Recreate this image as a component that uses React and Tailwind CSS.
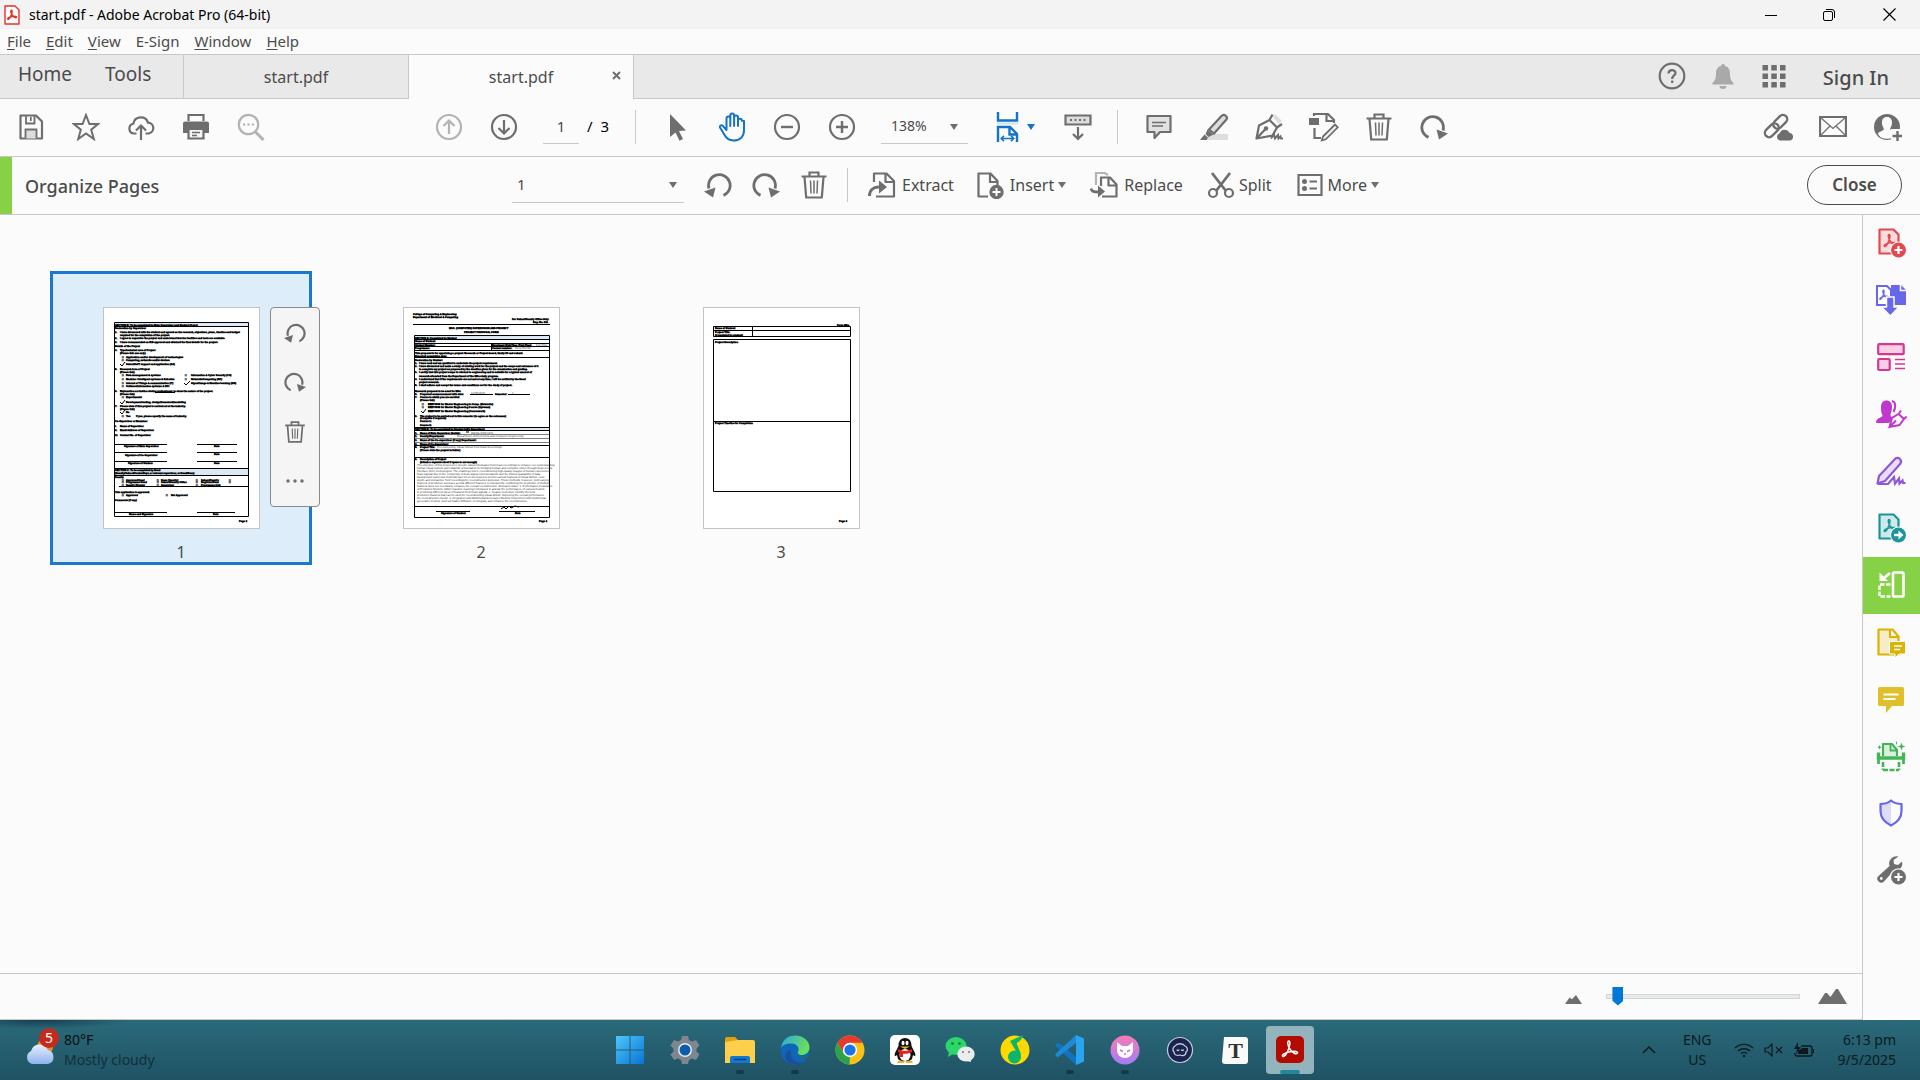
import React from 'react';

const G = '#6e6e6e';

function Icon({ size = 28, box = 28, children, className = '' }) {
  return (
    <svg width={size} height={size} viewBox={`0 0 ${box} ${box}`} fill="none" stroke={G} strokeWidth="2.2" className={`shrink-0 ${className}`} aria-hidden="true">
      {children}
    </svg>
  );
}

const AcroMark = ({ x = 0, y = 0, k = 1, color, w = 1.8 }) => (
  <path
    transform={`translate(${x} ${y}) scale(${k})`}
    d="M11 2.500c-2.200 0-1.600 5 1.500 9.800 2.600 4.200 7.300 6.200 8.600 4.200 1-1.700-3-2.500-8.600-1.600-6.200 1-10 3.800-8.800 5.400 1.400 1.800 5-3 7-8.600C12.400 6.900 12.800 2.500 11 2.500z"
    stroke={color}
    strokeWidth={w}
    fill="none"
    strokeLinejoin="round"
  />
);

/* ---------- toolbar icons ---------- */
const Save = () => (
  <Icon>
    <path d="M3.500 2.500H19l6 6v17H3.500z" strokeLinejoin="round" />
    <path d="M9 2.500v8h8.500v-8M13.800 4v4" strokeWidth="1.800" />
    <path d="M8.500 25.500v-9h11v9" fill="#dcdcdc" strokeWidth="1.800" />
  </Icon>
);
const Star = () => (
  <Icon><path d="M14 2l3.400 9H26l-6.800 5.700 2.600 9.300L14 20.500 6.200 26l2.600-9.300L2 11h8.600z" strokeWidth="2" strokeLinejoin="miter" /></Icon>
);
const Cloud = () => (
  <Icon>
    <path d="M9.500 20.500H6.500A5 5 0 0 1 6.300 10.700 7.600 7.600 0 0 1 21 9.600a5.500 5.500 0 0 1 .8 10.900h-3.300" />
    <path d="M14 27V13M9 17.500l5-5 5 5" />
  </Icon>
);
const Print = () => (
  <Icon>
    <path d="M6.500 8V2h15v6" />
    <path d="M3 8.500h22a2 2 0 0 1 2 2V20h-5v-3H6v3H1v-9.500a2 2 0 0 1 2-2z" fill={G} stroke="none" />
    <path d="M6.500 16h15v9.500h-15z" fill="#f4f4f4" />
    <path d="M10 19.500h8M10 22.500h5" strokeWidth="1.500" />
  </Icon>
);
const Search = () => (
  <Icon>
    <g stroke="#b3b3b3">
      <circle cx="11.500" cy="11.500" r="9.700" />
      <path d="M18.500 19l8 8" strokeWidth="3" />
      <path d="M6 11.500h2.200M10.400 11.500h2.200M14.800 11.500H17" />
    </g>
  </Icon>
);
const Up = () => (
  <Icon><g stroke="#b3b3b3"><circle cx="14" cy="14" r="12" /><path d="M14 21V8M8.500 13L14 7.500 19.500 13" /></g></Icon>
);
const Down = () => (
  <Icon><circle cx="14" cy="14" r="12" /><path d="M14 7v13M8.500 15l5.500 5.500 5.500-5.500" /></Icon>
);
const Pointer = () => (
  <Icon><path d="M7 1l16 16.500-7 .6 4 8-3.500 1.700-4-8.200L7 24z" fill={G} stroke="none" /></Icon>
);
const Hand = () => (
  <Icon size={30} box={30}>
    <path
      stroke="#1473c8" strokeLinejoin="round" strokeLinecap="round" strokeWidth="2"
      d="M9.500 17V6.500a1.900 1.900 0 0 1 3.800 0V3.400a1.900 1.900 0 0 1 3.800 0v2a1.900 1.900 0 0 1 3.900 0v3.300a1.900 1.900 0 0 1 3.900 0L27 9v9c0 6.500-4 10.500-10.500 10.500-5 0-7.500-2.500-9.500-6.500L3 15.500c-.8-1.800 1.300-3 2.600-1.800L9.500 18M13.300 6.500V14M17.100 5.400V14M21 8v6"
    />
  </Icon>
);
const Minus = () => <Icon><circle cx="14" cy="14" r="12" /><path d="M8 14h12" strokeWidth="2.400" /></Icon>;
const Plus = () => <Icon><circle cx="14" cy="14" r="12" /><path d="M8 14h12M14 8v12" strokeWidth="2.400" /></Icon>;
const Fit = () => (
  <Icon size={30} box={30}>
    <g stroke="#1473c8" strokeWidth="2.400">
      <path d="M5 0v8.500h19V0" />
      <path d="M4 11.500h21" stroke="#cfe3f5" strokeWidth="2" />
      <path d="M5 30V15h12l7 7v8M16.500 15v7.500H24" />
      <path d="M8.500 26.500h12M11 23.800l-2.800 2.700 2.800 2.700M18 23.800l2.800 2.700-2.800 2.700" strokeWidth="1.600" />
    </g>
  </Icon>
);
const Scroll = () => (
  <Icon>
    <path d="M1.500 2.500h25v9h-25z" fill="#dcdcdc" />
    <path d="M6 7h2M10.500 7h2M15 7h2M19.500 7h2" strokeWidth="2" />
    <path d="M14 14v12M9 21l5 5 5-5" />
  </Icon>
);
const Comment = () => (
  <Icon><path d="M2.500 3h23v16H15l-5.500 6v-6h-7z" fill="#e2e2e2" strokeLinejoin="round" /><path d="M7 9.500h14M7 13h11" strokeWidth="1.300" /></Icon>
);
const Highlight = () => (
  <Icon>
    <path d="M10 21h18v6H6z" fill="#dedede" stroke="none" />
    <path d="M9 16.500L21.500 3a3 3 0 0 1 4.500 4L14 20.500z" fill="#dedede" />
    <path d="M7.500 16.500l6 5-5 2.500-3-3zM4.500 21.500l3.500 3-1.500 2.500H0z" fill={G} stroke="none" />
  </Icon>
);
const Sign = () => (
  <Icon>
    <path d="M17 3l3-2 7 7-3 3z" fill="#dedede" stroke="none" />
    <path d="M1.500 25.500L4 12.500 14.500 7l7.500 7.500-4.500 8zM1.500 25.500l9-9.500M14.500 7l3-5.500M22 14.500l5-3.500" strokeLinejoin="round" strokeWidth="2.200" />
    <circle cx="11" cy="15.500" r="1.200" fill={G} />
    <path d="M16 25.500l3-4 1 4 3-3.500.5 3.500 2-2 .5 2h2" strokeWidth="2" />
  </Icon>
);
const EditDoc = () => (
  <Icon size={30} box={30}>
    <path d="M0 6h10v7H0z" fill={G} stroke="none" />
    <path d="M5 4V2h14l6 6v3M17.500 2v7H25M5.500 16v10H12" />
    <path d="M14 24.500L26 12.500l2.800 2.800L16.800 27.300l-4 1.200z" fill="#f2f2f2" strokeWidth="1.800" />
  </Icon>
);
const Trash = ({ size = 28 }) => (
  <Icon size={size}>
    <path d="M9.500 5.500v-4h9v4M1.500 5.500h25" />
    <path d="M4.500 6l1.700 20.500h15.600L23.500 6" />
    <path d="M10.500 9.500l.5 13M14 9.500v13M17.500 9.500l-.5 13" strokeWidth="1.500" />
  </Icon>
);
const Rotate = ({ flip, size = 28 }) => (
  <Icon size={size}>
    <g transform={flip ? 'translate(28 0) scale(-1 1)' : undefined}>
      <path d="M8.500 24.400A10.800 10.800 0 1 1 23 17.500" strokeWidth="2.800" />
      <path d="M16.500 16.500l11.500 4-9 6z" fill={G} stroke="none" />
    </g>
  </Icon>
);
const LinkCloud = () => (
  <Icon size={30} box={30}>
    <g transform="rotate(-45 13 14)" strokeWidth="2.400">
      <rect x="-1" y="9.800" width="16" height="8.500" rx="4.200" />
      <rect x="11" y="9.800" width="16" height="8.500" rx="4.200" />
    </g>
    <path d="M14 21.500l8-5 8 5v7H13z" fill="#fbfbfb" stroke="none" />
    <path d="M17 28.500a3.700 3.700 0 0 1-.3-7.200 5.400 5.400 0 0 1 9.800-.6 4 4 0 0 1 .8 7.800z" fill={G} stroke="none" />
  </Icon>
);
const Mail = () => (
  <Icon><path d="M1 4h26v19H1z" /><path d="M1.500 4.500L14 15.500 26.500 4.500M1.500 22.500l9.500-9.500M26.500 22.500L17 13" strokeWidth="1.300" /></Icon>
);
const AddUser = () => (
  <Icon>
    <circle cx="13" cy="14" r="13" fill={G} stroke="none" />
    <path d="M13 4c3.600 0 5.300 2.700 5 6.500-.2 2.700-1.600 4-1.800 5.400-.2 1.700 5.300 2.600 6 4.600C20 25 17 25.800 13 25.800S6 25 3.800 20.500c.7-2 6.200-2.900 6-4.600C9.600 14.500 8.200 13.200 8 10.500 7.700 6.700 9.400 4 13 4z" fill="#fbfbfb" stroke="none" />
    <path d="M17 16h11v12H17z" fill="#fbfbfb" stroke="none" />
    <path d="M23.500 18v10M18.500 23h10" strokeWidth="2.400" />
  </Icon>
);

/* ---------- organise bar icons ---------- */
const Extract = () => (
  <Icon>
    <path d="M6 11V2.500h12.500L26 10v15.500H8M17.500 2.500V11H26" strokeLinejoin="round" />
    <path d="M1.500 25c0-6 4-9 9-9h3" strokeWidth="3" /><path d="M11 9.500l8 6.500-8 6.500z" fill={G} stroke="none" />
  </Icon>
);
const Insert = () => (
  <Icon>
    <path d="M12 25.500H2.500v-23h12L21.500 10v4M14 2.500V11h7.500" strokeLinejoin="round" />
    <circle cx="20.500" cy="21" r="7.200" fill={G} stroke="none" /><path d="M20.500 17v8M16.500 21h8" stroke="#fff" strokeWidth="2" />
  </Icon>
);
const Replace = () => (
  <Icon>
    <path d="M6 14V2h9l3 2" stroke="#b3b3b3" />
    <path d="M11 15V6.500h9l6.500 7v12H12M18.500 6.500v8h8" strokeLinejoin="round" />
    <path d="M1 17.500c.5 3 2.500 3.500 8 3.500" strokeWidth="2.800" /><path d="M8 14.500l7 6-7 6z" fill={G} stroke="none" />
  </Icon>
);
const Split = () => (
  <Icon>
    <path d="M5 2l14 18M23 2L9 20" strokeWidth="2.800" />
    <circle cx="6" cy="22" r="4" /><circle cx="22" cy="22" r="4" />
  </Icon>
);
const MoreList = () => (
  <Icon>
    <path d="M2.500 4h23v20h-23z" />
    <circle cx="8.500" cy="10.500" r="2.500" fill={G} stroke="none" /><circle cx="8.500" cy="17.500" r="2.500" fill={G} stroke="none" />
    <path d="M13.500 10.500H21M13.500 17.500H21" />
  </Icon>
);
const Caret = ({ className = '', color = G }) => (
  <svg width="8" height="6" viewBox="0 0 8 6" className={`shrink-0 ${className}`} aria-hidden="true"><path d="M0 0h8L4 6z" fill={color} /></svg>
);

/* ---------- right rail ---------- */
const PdfPage = ({ c, f }) => (
  <>
    <path d="M3.500 1.500h14l5 5v19h-19z" fill={f} stroke={c} strokeLinejoin="round" />
    <AcroMark x={6} y={5} k={0.65} color={c} w={2.4} />
  </>
);
const rail = [
  ['Create PDF', <><PdfPage c="#e34850" f="#fadcdc" /><circle cx="22.500" cy="22" r="8.500" fill="#fbfbfb" stroke="none" /><circle cx="22.500" cy="22" r="7.500" fill="#e34850" stroke="none" /><path d="M22.500 18v8M18.500 22h8" stroke="#fff" strokeWidth="2.200" /></>],
  ['Export PDF', <><path d="M1 1h10l4 4v15H1z" stroke="#6767ec" strokeWidth="2" fill="#fff" /><path d="M15 0h10l5 5v15H15z" fill="#6767ec" stroke="none" /><path d="M24.500 0v5.500H30" stroke="#fff" strokeWidth="1.500" /><AcroMark x={2} y={4} k={0.5} color="#6767ec" w={2.6} /><path d="M10.500 12h7.500v10h5L14.300 31 5.500 22h5z" fill="#6767ec" stroke="#fbfbfb" strokeWidth="1.500" /></>],
  ['Edit PDF', <><rect x="2.200" y="2.200" width="25.500" height="10" rx="1" fill="#f7cfe6" stroke="#d83790" /><rect x="2.200" y="17" width="11.500" height="11" rx="1" fill="#f7cfe6" stroke="#d83790" /><path d="M19 17.500h10M19 22h10M19 26.500h10" stroke="#d83790" strokeWidth="1.600" /></>],
  ['Request E-signatures', <><path d="M0 24c0-6 7-5 6.500-8C5 14 5 11 5 8c0-4 2-6.500 5.500-6.500S16 4 16 8c0 4-1.500 6-1.500 8 0 1.500 1.500 2 2 3L13 24z" fill="#c038cc" stroke="none" /><path d="M16 2c4 1 4 6 1.500 11" stroke="#c038cc" strokeWidth="2" /><path d="M13.500 28l2.500-9 6.500-4 5.500 5-4.500 6zM14 27.500l6-6M23 14.500l2-3M28 20l2.500-2.500" stroke="#c038cc" strokeWidth="2" fill="#fbfbfb" /></>],
  ['Fill & Sign', <><path d="M3 20L19.500 2.500c3-2 7 1.500 5 5L9 25l-7.500 2.500z" fill="#e8defa" stroke="#9256d9" strokeLinejoin="round" /><path d="M2 28h10l6-7 1 6.500 4-5 .5 5 3-3 .5 2.500h2.500" stroke="#9256d9" /></>],
  ['Send for Comments', <><PdfPage c="#1b959a" f="#cfe9ea" /><circle cx="22.500" cy="22" r="8.500" fill="#fbfbfb" stroke="none" /><circle cx="22.500" cy="22" r="7.500" fill="#1b959a" stroke="none" /><path d="M18 22h6" stroke="#fff" strokeWidth="2.400" /><path d="M22.500 17.500l5 4.500-5 4.500z" fill="#fff" stroke="none" /></>],
  ['Organize Pages', <><rect x="17" y="2.500" width="10.500" height="24" rx="1" stroke="#fff" strokeWidth="2.600" /><path d="M14.500 14.500h-11v12h11" stroke="#fff" strokeWidth="2.400" strokeDasharray="4.500 1.500" /><path d="M14 3L8 8" stroke="#fff" strokeWidth="2.800" /><path d="M3.500 2.500V11H12z" fill="#fff" stroke="none" /></>],
  ['Combine Files', <><path d="M2.500 2.500h14l6 7v18h-20zM14 2.500V10h8" fill="#f4edc8" stroke="#dbb304" strokeLinejoin="round" /><path d="M13.500 14.500h16v12.500h-6.500l-4 4v-4h-5.500z" fill="#dbb304" stroke="#fbfbfb" strokeWidth="1" /><path d="M18 19h8M18 22.500h6" stroke="#fff" strokeWidth="1.500" /></>],
  ['Comment', <><path d="M3.500 3h23a1.500 1.500 0 0 1 1.500 1.500v16a1.500 1.500 0 0 1-1.500 1.500H16l-6 7v-7H3.500A1.500 1.500 0 0 1 2 20.500v-16A1.500 1.500 0 0 1 3.500 3z" fill="#dfbf2b" stroke="none" /><path d="M7.500 10.500h15M7.500 15h12" stroke="#fff" strokeWidth="2" /></>],
  ['Scan & OCR', <><path d="M7 15V3h9l5 6v6" fill="#d8f0dc" stroke="#44b556" /><path d="M14.500 3v6.500H21" stroke="#44b556" strokeWidth="1.800" /><path d="M2.500 11.500V17h25v-5.500" stroke="#44b556" strokeWidth="3.400" /><path d="M2.500 15v8M27.500 15v8" stroke="#44b556" strokeWidth="2.800" /><path d="M7 21v8M23 21v8M7 29h16" stroke="#44b556" strokeDasharray="5 1.500" strokeWidth="2.600" /><path d="M25.500 1.500l1 3 3 1-3 1-1 3-1-3-3-1 3-1zM3.500 4l.7 1.500 1.500.7-1.500.7-.7 1.500-.7-1.500-1.500-.7 1.500-.7zM20.500 0l.7 2-.7 2-.7-2z" fill="#44b556" stroke="none" /></>],
  ['Protect', <><path d="M15 2.500V27.500C8 24 4.500 19.500 4.500 13V6c4 0 8-1 10.500-3.500z" fill="#dcdcf8" stroke="none" /><path d="M15 2.500c3 2.500 6.500 3.500 10.500 3.500v7c0 6.500-3.500 11-10.500 14.500C8 24 4.500 19.500 4.500 13V6C8.500 6 12 5 15 2.500z" stroke="#6767ec" strokeLinejoin="round" /></>],
  ['More Tools', <><path d="M22.500 1.500a7.500 7.500 0 0 0-9 9.500L2.500 21a3.800 3.800 0 0 0 5.500 5.500L17.500 16a7.500 7.500 0 0 0 8.500-9.500l-4 3.500-4-1-.5-4z" fill={G} stroke="none" /><circle cx="5.300" cy="23.500" r="1.400" fill="#fbfbfb" stroke="none" /><circle cx="22.500" cy="22" r="8.700" fill="#fbfbfb" stroke="none" /><circle cx="22.500" cy="22" r="7.500" fill={G} stroke="none" /><path d="M22.500 18v8M18.500 22h8" stroke="#fff" strokeWidth="2.200" /></>],
];

/* ---------- miniature pages ---------- */
const pageOne = [
  [12, 19, 'SECTION B: To be completed by Main Supervisor and Student (if any)'],
  [12, 22, 'Declaration by Supervisor'],
  [12, 26, '1.'], [17, 26, 'I have discussed with the student and agreed on the research, objectives, plans, timeline and budget'],
  [17, 29, 'required for the completion of the project.'],
  [12, 32, '2.'], [17, 32, 'I agree to supervise the project and understand that the facilities and tools are available.'],
  [12, 36, '3.'], [17, 36, 'I have recommended an IRB approval and obtained the final details for the project.'],
  [12, 40, 'Details of the Project'],
  [12, 44, '4.'], [17, 44, 'Type/technical area of Project'], [17, 47, '(Please tick one only)'],
  [19, 51, '□'], [23, 51, 'Application and/or development of technologies'],
  [19, 54, '□'], [23, 54, 'Computing, networks and/or devices'],
  [23, 58, 'Scientific/IT support and application (SA)'],
  [12, 63, '5.'], [17, 63, 'Research Area of Project'], [17, 66, '(Please tick)'],
  [19, 69, '□'], [23, 69, 'Data management & systems'], [82, 69, '□'], [88, 69, 'Information & Cyber Security (CS)'],
  [19, 73, '□'], [23, 73, 'Machine / Intelligent systems & Robotics'], [82, 73, '□'], [88, 73, 'Networks/Computing (NC)'],
  [19, 77, '□'], [23, 77, 'Internet of Things & communication (IT)'], [88, 77, 'Signal/Image & Machine learning (MS)'],
  [19, 80, '□'], [23, 80, 'Software/Information systems & HCI'],
  [12, 85, '6.'], [17, 85, 'Explanation on the/the relating professional, to show the nature of the project.'], [17, 88, '(Please tick)'],
  [19, 91, '□'], [23, 91, 'Experimental'],
  [23, 96, 'Development/coding, design/framework/modelling'],
  [12, 100, '7.'], [17, 100, 'Please state if this project is carried out at the industry.'], [17, 103, '(Please tick)'],
  [23, 106, 'No'], [19, 110, '□'], [23, 110, 'Yes'], [33, 110, 'If yes, please specify the name of industry.'],
  [12, 115, 'Co-Supervisor or Examiner'],
  [12, 120, 'i.'], [17, 120, 'Name of Supervisor'], [12, 124, 'ii.'], [17, 124, 'Email Address of Supervisor'], [12, 129, 'iii.'], [17, 129, 'Contact No. of Supervisor'],
  [21, 140, 'Signature of Main Supervisor'], [111, 140, 'Date'],
  [22, 149, 'Signature of Co-Supervisor'], [111, 148, 'Date'],
  [25, 157, 'Signature of Student'], [111, 157, 'Date'],
  [12, 164, 'SECTION C: To be completed by Head'],
  [12, 167, '(Faculty/School/Centre/Dept, or relevant supervisor, or Head/Dean)'],
  [12, 171, 'Faculty'],
  [19, 174, '□'], [23, 174, 'Approved Head'], [54, 174, '□'], [58, 174, 'Dean (Faculty)'], [93, 174, '□'], [98, 174, 'School/Faculty'], [126, 174, '□'],
  [19, 176, '□'], [23, 176, 'Programme Head'], [54, 176, '□'], [58, 176, 'School/Faculty Office'], [93, 176, '□'], [98, 176, 'Registrar/Dean'], [126, 176, '□'],
  [19, 179, '□'], [23, 179, 'Faculty Director'], [54, 179, '□'], [58, 179, 'Supervisor'], [93, 179, '□'], [98, 179, 'Programme Unit'],
  [12, 186, 'This application is approved:'],
  [19, 189, '□'], [23, 189, 'Approved'], [63, 189, '□'], [68, 189, 'Not Approved'],
  [12, 194, 'Comments (if any)'],
  [26, 208, 'Name and Signature'], [110, 208, 'Date'],
  [136, 215, 'Page 2'],
];

const pageTwo = [
  [10, 8, 'College of Computing & Engineering'], [10, 11, 'Department of Electrical & Computing'],
  [109, 13, 'For School/Faculty Office Only'], [130, 16, 'Reg. No. 001'],
  [46, 22, 'MSC. (COMPUTER) SUPERVISION AND PROJECT'], [61, 26, 'PROJECT PROPOSAL FORM'],
  [12, 32, 'SECTION A: Completed by Student'],
  [12, 35, 'Name of Student:'], [12, 39, 'Student Number:'], [89, 39, 'Enrolment (Full-Time / Part-Time)'],
  [12, 42, 'Programme:'], [89, 42, 'Contact number:'],
  [12, 47, 'This proposal is for appointing a project: Research or Project-based, kindly fill and submit.'], [12, 50, 'Expected completion date:'],
  [12, 54, 'Declaration by Student'],
  [12, 57, '1.'], [16, 57, 'I have read and am qualified to undertake the project requirement.'],
  [12, 60, '2.'], [16, 60, 'I have discussed and make a study of existing work for the project and the scope and outcomes of it'],
  [16, 63, 'to complete my project as proposed by the deadline given for the examination and grading.'],
  [12, 66, '3.'], [16, 66, 'I certify that this project scope is relevant to engineering and is suitable for a typical amount of'],
  [16, 70, 'research allocated from the Department of the MSc study program.'],
  [12, 73, '4.'], [16, 73, 'I understand that if the requirements are not met at any time, I will be notified by the Head'], [16, 76, 'project research.'],
  [12, 79, '5.'], [16, 79, 'I shall adhere and accept the terms and conditions set for the study of project.'],
  [12, 85, 'Research proposal to be used for MSc'],
  [12, 88, '6.'], [17, 88, 'Proposed commencement with date:'], [92, 88, 'Semester:'],
  [12, 91, '7.'], [17, 91, 'Course in which you are enrolled'], [17, 94, '(Please tick)'],
  [19, 98, '□'], [25, 98, 'EEEY4099 for Master Engineering in Comp. (Networks)'],
  [19, 101, '□'], [25, 101, 'EEEY4098 for Master Engineering Course (Systems)'],
  [25, 105, 'EEEY4097 for Master Engineering (Coursework)'],
  [12, 110, '8.'], [17, 110, 'The project to be carried out in this semester (to agree as the outcomes)'], [17, 112, '(Complete if required)'], [17, 115, 'Course 1:'], [17, 119, 'Course 2:'],
  [12, 123, 'SECTION B: To be completed by Student (with Supervisor)'],
  [12, 127, '1.'], [17, 127, 'Name of Main Supervisor (Guide):'], [12, 130, '2.'], [17, 130, 'Faculty/Department:'],
  [12, 134, '3.'], [17, 134, 'Name of the Co-supervisor (if any) Department:'], [12, 138, '4.'], [17, 138, 'Name of Co-Supervisor:'],
  [12, 141, '5.'], [17, 141, 'Project Title:'], [17, 144, '(Please state the project in italics)'],
  [12, 153, '6.'], [17, 153, 'Description of Project'], [17, 156, '(Attach a separate sheet if space is not enough)'],
  [38, 207, 'Signature of Student'], [112, 207, 'Date'], [136, 215, 'Page 1'],
];
const abstract = [
  'The objective of this project is to decode visual information from brain recordings to enhance our understanding',
  'human visual system and establish a foundation for bridging human and computer vision through Brain-Comp',
  'Interface (BCI) technologies. The challenge lies in reconstructing high-quality images of human experiences',
  'brain signals due to the complexity of brain signal representations and the limited availability of data.',
  'Background numerous methods have been developed to predict various features of visual stimuli, color,',
  'depth, and semantics, from recordings for reconstruction purposes. These methods, however, yield varying',
  'degrees of prediction accuracy across different features. Consequently, combining the prediction of multiple',
  'features does not necessarily enhance the overall reconstruction. Research Issue: 1. Performance Evaluation',
  'of Prediction Models: Utilize machine learning techniques to assess the performance of various models',
  'in predicting different types of features from brain signals. 2. Feature Selection: Identify the best',
  'predictive features that can be used for reconstructing visual stimuli, improving the overall performance',
  'the reconstruction model. 3. Integration with Multimodal Generative Models: Experiment with multimodal',
  'generative models, such as Stable Diffusion, to integrate and enhance the reconstruction.',
];
const pageThree = [
  [134, 19, 'Form MSc'], [12, 22, 'Name of Student:'], [12, 26, 'Project Title:'], [12, 29, '(Completed by student)'],
  [12, 36, 'Project Description'], [12, 117, 'Project Timeline for Completion'], [136, 215, 'Page 3'],
];

function Sheet({ rows, children, label }) {
  return (
    <svg width="157" height="222" viewBox="0 0 157 222" role="img" aria-label={label} className="block shrink-0 bg-white" textRendering="geometricPrecision">
      <rect x="0.500" y="0.500" width="156" height="221" fill="#fff" stroke="#c4c4c4" />
      {children}
      <g fontFamily="Liberation Sans, sans-serif" fontSize="2.500" fontWeight="700" fill="#000" stroke="#000" strokeWidth="0.400">
        {rows.map(([x, y, t], i) => <text key={i} x={x} y={y}>{t}</text>)}
      </g>
    </svg>
  );
}
const K = { fill: 'none', stroke: '#000', strokeWidth: 1 };

const sheets = [
  <Sheet key="1" rows={pageOne} label="Page 1">
    <path d="M11 16h135v4H11zM11 162h135v7H11z" fill="#dbe8f5" />
    <path {...K} d="M11.500 15.500h134v194h-134zM11 19.500h135M11 161.500h135M11 168.500h135M11 137.500h53M94 137.500h40M11 145.500h53M94 145.500h40M11 154.500h53M94 154.500h40M16 179.500h129M11 205.500h53M94 205.500h38M52 85.500h20" />
    <path {...K} d="M17 57l2 2 3-4M17 95l2 2 3-4M17 105l2 2 3-4M81 76l2 2 4-4" />
  </Sheet>,
  <Sheet key="2" rows={pageTwo} label="Page 2">
    <path d="M11 29h135v3H11zM11 120h135v4H11z" fill="#dbe8f5" />
    <path {...K} d="M10 17.500h137M11.500 28.500h135v182h-135zM11 32.500h135M11 36.500h135M11 39.500h135M11 43.500h135M88.500 36v7M11 50.500h135M11 120.500h135M11 123.500h135M11 138.500h135M11 150.500h135M11 199.500h135M67 87.500h23M105 87.500h22M33 204.500h34M96 204.500h36" />
    <path {...K} strokeWidth="0.500" d="M11 127.500h135M11 131.500h135M11 135.500h135" />
    <path {...K} d="M18 104l2 2 3-4M63 125h3M98 202l3-2 2 2 3-3 2 2 4-2 4 1" />
    <g fontFamily="Liberation Sans, sans-serif" fontSize="2.800" fill="#333">
      <text x="68" y="127">WANG XINCHEN</text><text x="133" y="39">Full-Time</text><text x="112" y="42">0123456789</text>
      <text x="54" y="130">Department of Electronics and Computer Engineering</text>
      <text x="34" y="141">Reconstructing Visual Stimuli from Brain Recordings</text>
      <text x="68" y="87">12/05/2025</text><text x="109" y="87">1</text>
      {abstract.map((t, i) => <text key={t} x="14" y={159 + i * 3}>{t}</text>)}
    </g>
  </Sheet>,
  <Sheet key="3" rows={pageThree} label="Page 3">
    <path {...K} d="M10.500 19.500h137v10h-137zM10 23.500h137M49.500 19v10M10.500 32.500h137v152h-137zM10 114.500h137" />
  </Sheet>,
];

/* ---------- taskbar icons ---------- */
const apps = [
  { n: 'Start', g: <><defs><linearGradient id="win" x1="0" y1="0" x2="1" y2="1"><stop stopColor="#4cc8fb" /><stop offset="1" stopColor="#0a74d4" /></linearGradient></defs><path d="M1 1h13.500v13.500H1zM15.500 1H29v13.500H15.500zM1 15.500h13.500V29H1zM15.500 15.500H29V29H15.500z" fill="url(#win)" /></> },
  { n: 'Settings', g: <><path d="M12 1h6l1 4 3 1.500 4-1.500 3.500 5.500-3 3v3l3 3L26 25l-4-1.500-3 1.500-1 4h-6l-1-4-3-1.500L4 25 .5 19.500l3-3v-3l-3-3L4 5l4 1.500L11 5z" fill="#7e868f" /><circle cx="15" cy="15" r="7" fill="#e8eef2" /><circle cx="15" cy="15" r="5.500" fill="#0b5cad" /></> },
  { n: 'File Explorer', run: true, g: <><path d="M0 4a2 2 0 0 1 2-2h8l3 3v5H0z" fill="#e3a008" /><path d="M0 7l13-2h15a2 2 0 0 1 2 2v21H0z" fill="#fdcf4a" /><path d="M5 28v-5a2 2 0 0 1 2-2h16a2 2 0 0 1 2 2v5z" fill="#1378d4" /><path d="M9 24.500h12" stroke="#083e75" strokeWidth="1.500" /></> },
  { n: 'Edge', run: true, g: <><defs><linearGradient id="edge" x1="0" y1="0" x2="1" y2=".4"><stop stopColor="#2aa7e0" /><stop offset="1" stopColor="#6ae05a" /></linearGradient></defs><circle cx="15" cy="15" r="14.500" fill="#0f66b8" /><path d="M1 13C2 5 8 .5 15 .5c9 0 14.500 6 14.500 12 0 5-4 7.500-8 7.500-3 0-4.500-1.500-3.500-3C20 13 17 8.500 11.500 8.500 6 8.500 2 10.500 1 13z" fill="url(#edge)" /><path d="M11 15c-2 7 4 13 12 12-6 4-14 3-17-3-2-4 0-8 5-9z" fill="#1b4f9c" /><path d="M18 18c1 4 7 4 11 1.500-1 1.500-1.500 2.500-2.500 3.500-4 1-9-1-8.500-5z" fill="#27677a" /></> },
  { n: 'Chrome', g: <><circle cx="15" cy="15" r="14.500" fill="#fbc116" /><path d="M2.400 7.750A14.500 14.500 0 0 1 27.600 7.750H15L8.700 18.600z" fill="#e33b2e" /><path d="M2.400 7.750L8.700 18.600 15 22.500 14.500 29.500A14.500 14.500 0 0 1 2.400 7.750z" fill="#2ba24c" /><circle cx="15" cy="15" r="7.200" fill="#fff" /><circle cx="15" cy="15" r="5.600" fill="#1a73e8" /></> },
  { n: 'QQ', g: <><rect width="30" height="30" rx="5" fill="#fff" /><path d="M15 3c-5 0-6.500 4-6.500 8L5 18c-1 3 0 4 2 2l1 4c2 3 12 3 14 0l1-4c2 2 3 1 2-2l-3.500-7c0-4-1.500-8-6.500-8z" fill="#111" /><ellipse cx="15" cy="20" rx="5.500" ry="6" fill="#fff" /><ellipse cx="13" cy="8" rx="1.500" ry="2.200" fill="#fff" /><ellipse cx="17" cy="8" rx="1.500" ry="2.200" fill="#fff" /><path d="M10 11.500h10l-5 2.500zM8 26h6v2H7zM16 26h6l1 2h-7z" fill="#fbb116" /><path d="M8 14c4 2.500 10 2.500 14 0v3c-3 1.500-6 2-9 1.800V22h-3v-4l-2-1z" fill="#e61f19" /></> },
  { n: 'WeChat', g: <><ellipse cx="11" cy="11" rx="10.500" ry="9" fill="#2bd66a" /><path d="M4 17l-1 5 5-3z" fill="#2bd66a" /><circle cx="7.500" cy="8.500" r="1.300" fill="#14713a" /><circle cx="14.500" cy="8.500" r="1.300" fill="#14713a" /><ellipse cx="21" cy="19" rx="8.700" ry="7.500" fill="#e9edee" /><path d="M22 26l4 1-.5-4z" fill="#e9edee" /><circle cx="18" cy="17" r="1" fill="#777" /><circle cx="24" cy="17" r="1" fill="#777" /></> },
  { n: 'QQ Music', g: <><circle cx="15" cy="15" r="14.500" fill="#ffd800" /><circle cx="14.500" cy="22" r="6.500" fill="#0bb56b" /><path d="M23 0L10 6l9 15 2-2L16.500 8C19 7 22 5 23 0z" fill="#0bb56b" /></> },
  { n: 'Visual Studio Code', run: true, g: <><path d="M21 0l8 3.500v23L21 30 0 10.500l2.500-3 4.500 2.500 14 12z" fill="#1173be" /><path d="M0 19.500l2.500 3L21 8V0L2.500 17z" fill="#1c8ad6" /><path d="M21 0l8 3.500v23L21 30z" fill="#2ba4ee" /></> },
  { n: 'GitHub Cat', run: true, g: <><defs><linearGradient id="cat" x1="0" y1="0" x2="0" y2="1"><stop stopColor="#f77bb4" /><stop offset="1" stopColor="#a47cf7" /></linearGradient></defs><circle cx="15" cy="15" r="14.500" fill="url(#cat)" /><path d="M7 7l5 4h6l5-4v8c0 5-4 8-8 8s-8-3-8-8z" fill="#fff" /><path d="M10 15l3 1.500M20 15l-3 1.500M14 19h2" stroke="#c673cf" strokeWidth="1.500" /></> },
  { n: 'Assistant', g: <><circle cx="15" cy="15" r="12.500" fill="#1b2450" stroke="#c9ced9" strokeWidth="1.200" /><path d="M10 11c2-3 8-3 10 0 3 1 3 5 1 6 0 4-4 4-6 3-3 1-6 0-6-3-2-2-1-5 1-6zM12 14.500a1 1 0 0 0 2 0M16.500 14.500a1 1 0 0 0 2 0" fill="none" stroke="#c9ced9" strokeWidth="1.300" /></> },
  { n: 'Typora', g: <><path d="M4 2h21a3 3 0 0 1 3 3v21a3 3 0 0 1-3 3H5a3 3 0 0 1-3-3z" fill="#fafafa" /><text x="15.500" y="23" textAnchor="middle" fontFamily="Liberation Serif, serif" fontSize="22" fontWeight="700" fill="#333">T</text></> },
  { n: 'Adobe Acrobat', active: true, g: <><rect x="1" y="1" width="28" height="27" rx="5" fill="#b30b00" /><AcroMark x={4.500} y={4} k={0.850} color="#fff" w={1.800} /></> },
];

function Tool({ label, children, className = 'w-[55px]' }) {
  return <button type="button" aria-label={label} className={`flex h-full shrink-0 items-center justify-center ${className}`}>{children}</button>;
}
function Action({ icon, children, caret, className = 'gap-1.5' }) {
  return (
    <button type="button" className={`flex h-full shrink-0 items-center text-base text-[#4b4b4b] ${className}`}>
      {icon}<span className="flex items-center gap-1">{children}{caret && <Caret />}</span>
    </button>
  );
}

export default function App() {
  return (
    <div className="flex min-h-screen flex-col bg-[#fbfbfb] font-['Noto_Sans',sans-serif] text-[#4b4b4b]">
      <header className="flex h-[29px] items-center bg-[#f3f3f3] pl-1 text-sm text-black">
        <svg width="16" height="20" viewBox="0 0 16 20" className="mr-[9px] shrink-0" aria-hidden="true">
          <path d="M1 1h10l4 4v14H1z" fill="#fff" stroke="#e5322d" strokeWidth="1.400" strokeLinejoin="round" />
          <AcroMark x={2} y={4} k={0.500} color="#e5322d" w={3} />
        </svg>
        <h1 className="whitespace-nowrap">start.pdf - Adobe Acrobat Pro (64-bit)</h1>
        <div className="ml-auto flex h-full">
          <button type="button" aria-label="Minimize" className="flex w-[58px] items-center justify-center"><svg width="12" height="12"><path d="M0 6.500h12" stroke="#000" /></svg></button>
          <button type="button" aria-label="Restore" className="flex w-[58px] items-center justify-center"><svg width="12" height="12" fill="none" stroke="#000"><rect x="0.500" y="2.500" width="9" height="9" rx="1.500" /><path d="M3 .5h6a2.500 2.500 0 0 1 2.500 2.500v6" /></svg></button>
          <button type="button" aria-label="Close window" className="flex w-[62px] items-center justify-center"><svg width="13" height="13"><path d="M.5 .5l12 12M12.500 .5l-12 12" stroke="#000" strokeWidth="1.200" /></svg></button>
        </div>
      </header>

      <nav aria-label="Menu" className="flex h-[26px] items-center gap-[15px] border-b border-[#c8c8c8] pb-0.5 pl-[7px] text-[15px] leading-5">
        {[['F', 'ile'], ['E', 'dit'], ['V', 'iew'], ['', 'E-Sign'], ['W', 'indow'], ['H', 'elp']].map(([u, r]) => (
          <button key={r} type="button"><span className="underline underline-offset-2">{u}</span>{r}</button>
        ))}
      </nav>

      <div className="flex h-11 items-stretch bg-[#e9e9e9]">
        <div className="flex w-[183px] gap-[33px] border-b border-[#c8c8c8] pb-1 pl-[18px] text-[19px]">
          <button type="button">Home</button>
          <button type="button">Tools</button>
        </div>
        <button type="button" className="w-[225px] border-b border-l border-[#c8c8c8] text-base">start.pdf</button>
        <div className="relative flex w-[226px] items-stretch border-x border-[#c8c8c8] bg-[#fbfbfb]">
          <button type="button" className="flex-1 text-base">start.pdf</button>
          <button type="button" aria-label="Close tab" className="absolute inset-y-0 right-3 flex items-center pb-1"><svg width="9" height="9"><path d="M1 1l7 7M8 1l-7 7" stroke={G} strokeWidth="2" /></svg></button>
        </div>
        <div className="flex flex-1 items-center justify-end border-b border-[#c8c8c8] pr-[31px]">
          <div className="flex h-full pb-0.5">
            <Tool label="Help" className="w-[51px]"><Icon><circle cx="14" cy="14" r="12.300" /><path d="M10.500 11.500c0-4.500 7-4.500 7-.5 0 2.500-3.300 2.500-3.300 6M14.200 18.500V21" /></Icon></Tool>
            <Tool label="Notifications" className="w-[51px]"><Icon><path d="M14 2a2 2 0 0 1 2 2c4 1 5 4 5 8 0 5 1.500 7 3.500 9v1.500h-21V21c2-2 3.500-4 3.500-9 0-4 1-7 5-8a2 2 0 0 1 2-2zM10.500 24h7a3.500 3 0 0 1-7 0z" fill="#a9a9a9" stroke="none" /></Icon></Tool>
            <Tool label="Apps" className="w-[51px]"><Icon><path d="M2.500 3h5.500v5.500H2.500zM11.300 3h5.500v5.500h-5.500zM20 3h5.500v5.500H20zM2.500 11.500h5.500V17H2.500zM11.300 11.500h5.500V17h-5.500zM20 11.500h5.500V17H20zM2.500 20h5.500v5.500H2.500zM11.300 20h5.500v5.500h-5.500zM20 20h5.500v5.500H20z" fill={G} stroke="none" /></Icon></Tool>
          </div>
          <button type="button" className="ml-[23px] pt-0.5 text-xl font-medium">Sign In</button>
        </div>
      </div>

      <div role="toolbar" aria-label="Document tools" className="flex h-[58px] items-center border-b border-[#c8c8c8] pr-[5px] pb-0.5 pl-[3px]">
        <Tool label="Save"><Save /></Tool>
        <Tool label="Star"><Star /></Tool>
        <Tool label="Upload"><Cloud /></Tool>
        <Tool label="Print"><Print /></Tool>
        <Tool label="Find"><Search /></Tool>
        <div className="w-[143px] shrink" />
        <Tool label="Previous page"><Up /></Tool>
        <Tool label="Next page"><Down /></Tool>
        <input aria-label="Page number" defaultValue="1" className="ml-3 h-[34px] w-9 border-b border-[#c8c8c8] bg-transparent text-center text-[15px] outline-none" />
        <span className="ml-2 w-8 text-[15px] whitespace-pre text-black">/  3</span>
        <div className="mr-[13px] ml-4 h-[34px] w-px bg-[#c8c8c8]" />
        <Tool label="Select"><Pointer /></Tool>
        <Tool label="Pan"><Hand /></Tool>
        <Tool label="Zoom out"><Minus /></Tool>
        <Tool label="Zoom in"><Plus /></Tool>
        <div className="relative ml-3 flex items-center">
          <select aria-label="Zoom level" className="h-[34px] w-[87px] appearance-none border-b border-[#c8c8c8] bg-transparent pl-[10px] text-sm outline-none"><option>138%</option></select>
          <Caret className="pointer-events-none absolute right-[10px]" />
        </div>
        <button type="button" aria-label="Fit width" className="mr-[15px] ml-[25px] flex items-center gap-1"><Fit /><Caret color="#1473c8" /></button>
        <Tool label="Scrolling"><Scroll /></Tool>
        <div className="mr-[13px] ml-3 h-[34px] w-px bg-[#c8c8c8]" />
        <Tool label="Comment"><Comment /></Tool>
        <Tool label="Highlight"><Highlight /></Tool>
        <Tool label="Sign"><Sign /></Tool>
        <Tool label="Edit"><EditDoc /></Tool>
        <Tool label="Delete"><Trash /></Tool>
        <Tool label="Rotate"><Rotate /></Tool>
        <div className="ml-auto flex h-full">
          <Tool label="Share link"><LinkCloud /></Tool>
          <Tool label="Email"><Mail /></Tool>
          <Tool label="Invite people"><AddUser /></Tool>
        </div>
      </div>

      <div className="flex h-[58px] border-b border-[#c8c8c8]">
        <div className="w-3 bg-[#87d147]" />
        <div role="toolbar" aria-label="Organize Pages" className="flex flex-1 items-center pr-[18px] pb-0.5">
          <h2 className="w-[486px] pt-0.5 pl-[13px] text-lg font-medium">Organize Pages</h2>
          <div className="relative ml-[14px] flex items-center">
            <select aria-label="Page range" className="h-9 w-[172px] appearance-none border-b border-[#c8c8c8] bg-transparent pl-[5px] text-[15px] outline-none"><option>1</option></select>
            <Caret className="pointer-events-none absolute right-[7px]" />
          </div>
          <Tool label="Rotate counterclockwise" className="ml-[10px] w-12"><Rotate flip /></Tool>
          <Tool label="Rotate clockwise" className="w-12"><Rotate /></Tool>
          <Tool label="Delete pages" className="w-12"><Trash /></Tool>
          <div className="mr-5 ml-[9px] h-[34px] w-px bg-[#c8c8c8]" />
          <Action icon={<Extract />}>Extract</Action>
          <Action icon={<Insert />} caret className="ml-[22px] gap-1.5">Insert</Action>
          <Action icon={<Replace />} className="ml-6 gap-1.5">Replace</Action>
          <Action icon={<Split />} className="ml-6 gap-1">Split</Action>
          <Action icon={<MoreList />} caret className="ml-6 gap-1">More</Action>
          <button type="button" className="ml-auto h-10 w-[95px] rounded-full border-[1.5px] border-[#4b4b4b] text-[17px] font-semibold">Close</button>
        </div>
      </div>

      <div className="flex flex-1">
        <div className="flex flex-1 flex-col">
          <main className="flex flex-1 flex-wrap content-start items-start pt-14 pl-[31px]">
            {sheets.map((s, i) => (
              <figure key={i} className="relative flex w-[300px] justify-center">
                <div className={i === 0 ? 'flex h-[294px] w-[262px] flex-col items-center border-[3px] border-[#1b78d0] bg-[#ddeefa] pt-[33px]' : 'flex h-[294px] w-[262px] flex-col items-center pt-9'}>
                  {s}
                  <figcaption className="mt-[11px] text-base leading-6">{i + 1}</figcaption>
                </div>
                {i === 0 && (
                  <div className="absolute top-9 left-[239px] flex h-[200px] w-[50px] flex-col items-center rounded border border-[#8a8a8a] bg-[#f5f5f5]">
                    <Tool label="Rotate page counterclockwise" className="min-h-0 w-full flex-1"><Rotate flip size={22} /></Tool>
                    <Tool label="Rotate page clockwise" className="min-h-0 w-full flex-1"><Rotate size={22} /></Tool>
                    <Tool label="Delete page" className="min-h-0 w-full flex-1"><Trash size={22} /></Tool>
                    <Tool label="More options" className="min-h-0 w-full flex-1"><svg width="18" height="4" fill={G}><circle cx="2" cy="2" r="1.700" /><circle cx="9" cy="2" r="1.700" /><circle cx="16" cy="2" r="1.700" /></svg></Tool>
                  </div>
                )}
              </figure>
            ))}
          </main>
          <footer className="flex h-[47px] items-center justify-end border-y border-[#c8c8c8] pr-[15px] pb-px">
            <svg width="17" height="9" viewBox="0 0 28 15" preserveAspectRatio="none" className="mt-1.5" aria-hidden="true"><path d="M0 15L7.500 4l4 3L18 0l10 15z" fill={G} /></svg>
            <input
              type="range" min="0" max="100" defaultValue="3" aria-label="Thumbnail size"
              className="mr-[18px] ml-6 h-5 w-[194px] appearance-none bg-transparent [&::-webkit-slider-runnable-track]:h-[5px] [&::-webkit-slider-runnable-track]:border [&::-webkit-slider-runnable-track]:border-[#d3d5d6] [&::-webkit-slider-runnable-track]:bg-[#e7eaea] [&::-webkit-slider-thumb]:-mt-2 [&::-webkit-slider-thumb]:h-[19px] [&::-webkit-slider-thumb]:w-[11px] [&::-webkit-slider-thumb]:appearance-none [&::-webkit-slider-thumb]:bg-[#0078d7] [&::-webkit-slider-thumb]:[clip-path:polygon(0_0,100%_0,100%_75%,50%_100%,0_75%)]"
            />
            <svg width="29" height="15" viewBox="0 0 29 15" aria-hidden="true"><path d="M0 15L7 4h2l3.500 4L18 0h2l9 15z" fill={G} /></svg>
          </footer>
        </div>
        <aside aria-label="Tools" className="flex w-[58px] flex-col border-l border-[#c8c8c8]">
          {rail.map(([name, art]) => (
            <button key={name} type="button" aria-label={name} className={`flex h-[57px] items-center justify-center pr-0.5 pb-0.5 ${name === 'Organize Pages' ? 'bg-[#87d147]' : ''}`}>
              <Icon size={30} box={30} className="overflow-visible">{art}</Icon>
            </button>
          ))}
        </aside>
      </div>

      <div className="grid h-[60px] grid-cols-[1fr_auto_1fr] items-center bg-linear-to-b from-[#2a6a7a] to-[#1f5364] text-sm">
        <button type="button" className="relative flex h-full items-center bg-[radial-gradient(ellipse_90px_9px_at_40px_0,#173f50,transparent)] pl-6 text-left">
          <svg width="32" height="40" viewBox="0 0 32 40" className="mr-2 shrink-0" aria-hidden="true">
            <defs><linearGradient id="cl" x1="0" y1="0" x2="0" y2="1"><stop stopColor="#e6efff" /><stop offset="1" stopColor="#8fb2ee" /></linearGradient></defs>
            <circle cx="21" cy="17" r="8" fill="#f08a1c" />
            <path d="M8 34a7 7 0 0 1-1-13 9 9 0 0 1 17-1 7.200 7.200 0 0 1 0 14z" fill="url(#cl)" />
          </svg>
          <span className="absolute top-2 left-[39px] flex size-5 items-center justify-center rounded-full bg-[#c42b1c] text-sm text-white">5</span>
          <span className="leading-5"><span className="block text-[#0c0f10]">80°F</span><span className="block text-[#12303a]">Mostly cloudy</span></span>
        </button>
        <div className="flex h-full">
          {apps.map((a) => (
            <button key={a.n} type="button" aria-label={a.n} className="relative flex w-[55px] items-center justify-center">
              <span className={a.active ? 'flex h-12 w-12 items-center justify-center rounded bg-[#93b4bd]' : 'flex h-12 w-12 items-center justify-center'}>
                <svg width="30" height="30" viewBox="0 0 30 30" className="shrink-0" aria-hidden="true">{a.g}</svg>
              </span>
              {a.run && <span className="absolute bottom-1.5 h-1 w-2 rounded-full bg-[#163a45]" />}
              {a.active && <span className="absolute bottom-1.5 h-1 w-5 rounded-full bg-[#22889a]" />}
            </button>
          ))}
        </div>
        <div className="flex items-center justify-end pr-6 text-[#0c1a1f]">
          <button type="button" aria-label="Show hidden icons" className="mr-[27px]"><svg width="14" height="8" fill="none"><path d="M1 7l6-6 6 6" stroke="#0c1a1f" strokeWidth="1.500" /></svg></button>
          <button type="button" className="mr-[22px] text-center leading-5">ENG<br />US</button>
          <button type="button" aria-label="Network, sound and battery" className="mr-6 flex items-center gap-[10px]">
            <svg width="20" height="16" fill="none" stroke="#0c1a1f" strokeWidth="1.400"><path d="M1 6a13 13 0 0 1 18 0M4 9a9 9 0 0 1 12 0M7 11.500a5 5 0 0 1 6 0" /><circle cx="10" cy="14" r="1.200" fill="#0c1a1f" stroke="none" /></svg>
            <svg width="20" height="14" fill="none" stroke="#0c1a1f" strokeWidth="1.200"><path d="M1 5h3l4-4v12L4 9H1zM12 4l6 6M18 4l-6 6" /></svg>
            <svg width="20" height="16" fill="none" stroke="#0c1a1f" strokeWidth="1.400"><path d="M7 4h9a2 2 0 0 1 2 2v6a2 2 0 0 1-2 2H3a2 2 0 0 1-2-2v-1" /><path d="M19 7h1v4h-1zM8 6h6v6H4V9z" fill="#0c1a1f" stroke="none" /><path d="M4 0L0 7h3l-1 5 5-7H4z" fill="#0c1a1f" stroke="none" /></svg>
          </button>
          <button type="button" className="text-right leading-5">6:13 pm<br />9/5/2025</button>
        </div>
      </div>
    </div>
  );
}
